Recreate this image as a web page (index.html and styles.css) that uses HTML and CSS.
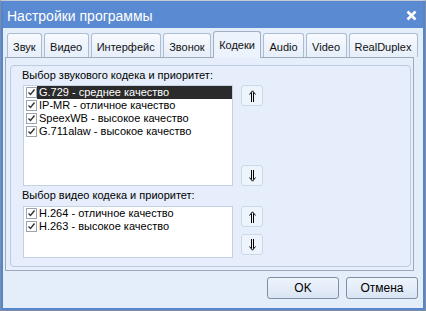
FILE: index.html
```html
<!DOCTYPE html>
<html lang="ru">
<head>
  <meta charset="UTF-8" />
  <title>Настройки программы</title>
  <link rel="stylesheet" href="styles.css">
</head>
<body>
  <div class="frame">
    <div class="window">
      <div class="titlebar">
        <span class="title">Настройки программы</span>
        <svg class="close" width="11" height="11" viewBox="0 0 11 11">
          <path d="M1.5 1.5 L9.5 9.5 M9.5 1.5 L1.5 9.5" stroke="#fff" stroke-width="2.6" />
        </svg>
      </div>

      <div class="tabs">
        <div class="tab">Звук</div>
        <div class="tab">Видео</div>
        <div class="tab">Интерфейс</div>
        <div class="tab">Звонок</div>
        <div class="tab active">Кодеки</div>
        <div class="tab">Audio</div>
        <div class="tab">Video</div>
        <div class="tab">RealDuplex</div>
      </div>

      <div class="panel">
        <div class="group">
          <div class="caption">Выбор звукового кодека и приоритет:</div>
          <div class="codec-row">
            <ul class="listbox audio">
              <li class="item selected">
                <span class="check"><svg width="9" height="9" viewBox="0 0 9 9"><path d="M1.5 4.5 L3.5 6.5 L7.5 1.5" fill="none" stroke="#333" stroke-width="1.4" /></svg></span>
                <span class="name">G.729 - среднее качество</span>
              </li>
              <li class="item">
                <span class="check"><svg width="9" height="9" viewBox="0 0 9 9"><path d="M1.5 4.5 L3.5 6.5 L7.5 1.5" fill="none" stroke="#333" stroke-width="1.4" /></svg></span>
                <span class="name">IP-MR - отличное качество</span>
              </li>
              <li class="item">
                <span class="check"><svg width="9" height="9" viewBox="0 0 9 9"><path d="M1.5 4.5 L3.5 6.5 L7.5 1.5" fill="none" stroke="#333" stroke-width="1.4" /></svg></span>
                <span class="name">SpeexWB - высокое качество</span>
              </li>
              <li class="item">
                <span class="check"><svg width="9" height="9" viewBox="0 0 9 9"><path d="M1.5 4.5 L3.5 6.5 L7.5 1.5" fill="none" stroke="#333" stroke-width="1.4" /></svg></span>
                <span class="name">G.711alaw - высокое качество</span>
              </li>
            </ul>
            <div class="arrows spread">
              <button class="arrow"><svg width="7" height="12" viewBox="0 0 7 12"><path d="M0.5 4.5 L3.5 0.8 L6.5 4.5 M2.5 2.5 V12 M4.5 2.5 V12" fill="none" stroke="#000" stroke-width="1" /></svg></button>
              <button class="arrow"><svg width="7" height="12" viewBox="0 0 7 12"><path d="M0.5 7.5 L3.5 11.2 L6.5 7.5 M2.5 0 V9.5 M4.5 0 V9.5" fill="none" stroke="#000" stroke-width="1" /></svg></button>
            </div>
          </div>

          <div class="caption second">Выбор видео кодека и приоритет:</div>
          <div class="codec-row">
            <ul class="listbox video">
              <li class="item">
                <span class="check"><svg width="9" height="9" viewBox="0 0 9 9"><path d="M1.5 4.5 L3.5 6.5 L7.5 1.5" fill="none" stroke="#333" stroke-width="1.4" /></svg></span>
                <span class="name">H.264 - отличное качество</span>
              </li>
              <li class="item">
                <span class="check"><svg width="9" height="9" viewBox="0 0 9 9"><path d="M1.5 4.5 L3.5 6.5 L7.5 1.5" fill="none" stroke="#333" stroke-width="1.4" /></svg></span>
                <span class="name">H.263 - высокое качество</span>
              </li>
            </ul>
            <div class="arrows">
              <button class="arrow"><svg width="7" height="12" viewBox="0 0 7 12"><path d="M0.5 4.5 L3.5 0.8 L6.5 4.5 M2.5 2.5 V12 M4.5 2.5 V12" fill="none" stroke="#000" stroke-width="1" /></svg></button>
              <button class="arrow"><svg width="7" height="12" viewBox="0 0 7 12"><path d="M0.5 7.5 L3.5 11.2 L6.5 7.5 M2.5 0 V9.5 M4.5 0 V9.5" fill="none" stroke="#000" stroke-width="1" /></svg></button>
            </div>
          </div>
        </div>
      </div>

      <div class="footer">
        <button class="btn">OK</button>
        <button class="btn">Отмена</button>
      </div>
    </div>
  </div>
</body>
</html>
```

FILE: styles.css
```css
body {
  margin: 0;
  font-family: 'Liberation Sans', Arial, sans-serif;
  font-size: 11px;
  color: #000;
  background: #fff;
}
.frame {
  width: 426px;
  height: 311px;
  box-sizing: border-box;
  border: 1px solid #7f8ea4;
  border-top-color: #c3cbd6;
}
.window {
  height: 100%;
  box-sizing: border-box;
  border: 2px solid #5585cd;
  border-top: none;
  background: #e4edfa;
  display: flex;
  flex-direction: column;
}
.titlebar {
  height: 27px;
  flex: none;
  background: #5a8ad1;
  display: flex;
  align-items: center;
  justify-content: space-between;
  padding: 2px 6px 0 4px;
  box-sizing: border-box;
}
.title {
  color: #fff;
  font-size: 14px;
}
.close {
  display: block;
}
.tabs {
  height: 29px;
  flex: none;
  display: flex;
  align-items: flex-end;
  gap: 2px;
  padding-left: 4px;
}
.tab {
  height: 24px;
  box-sizing: border-box;
  padding: 7px 5.5px 0 5px;
  border: 1px solid #aebcd0;
  border-bottom: none;
  border-radius: 3px 3px 0 0;
  background: linear-gradient(#f7fafe, #e6eefa);
  font-size: 11px;
  color: #111;
  position: relative;
  white-space: nowrap;
}
.tab.active {
  padding-top: 7px;
  background: #edf3fc;
  margin-bottom: -1px;
  height: 27px;
  z-index: 1;
  border-color: #a0afc4;
}
.panel {
  flex: 1;
  margin: 0 9px 0 2px;
  border: 1px solid #9eaabb;
  background: #e6eefb;
  padding: 7px 2px 3px 4px;
  display: flex;
}
.group {
  flex: 1;
  border: 1px solid #bccbe0;
  border-radius: 4px;
  padding: 2px 0 0 11px;
}
.caption {
  line-height: 14px;
  margin-bottom: 3px;
}
.caption.second {
  margin-top: 2px;
  margin-bottom: 4px;
}
.codec-row {
  display: flex;
  padding-left: 1px;
}
.listbox {
  list-style: none;
  margin: 0;
  padding: 0 0 0 2px;
  width: 210px;
  box-sizing: border-box;
  background: #fff;
  border: 1px solid #c3d1e3;
}
.listbox.audio {
  height: 101px;
}
.listbox.video {
  height: 52px;
}
.item {
  display: flex;
  height: 13px;
  line-height: 13px;
}
.check {
  width: 11px;
  height: 11px;
  box-sizing: border-box;
  border: 1px solid #9ba5b1;
  background: #fff;
  margin-top: 1px;
  flex: none;
  display: flex;
  align-items: center;
  justify-content: center;
}
.check svg {
  display: block;
}
.name {
  flex: 1;
  padding-left: 2px;
  white-space: nowrap;
}
.item.selected .name {
  background: #2b2b2b;
  color: #fff;
}
.arrows {
  display: flex;
  flex-direction: column;
  gap: 7px;
  margin-left: 8px;
}
.arrows.spread {
  justify-content: space-between;
}
.arrow {
  width: 22px;
  height: 21px;
  padding: 0;
  border: 1px solid #cbd8e8;
  border-radius: 3px;
  background: #eef4fc;
  display: flex;
  align-items: center;
  justify-content: center;
}
.arrow svg {
  display: block;
}
.footer {
  height: 37px;
  flex: none;
  display: flex;
  justify-content: flex-end;
  align-items: flex-start;
  gap: 7px;
  padding: 6px 5px 0 0;
  box-sizing: border-box;
}
.btn {
  width: 72px;
  height: 22px;
  border: 1px solid #838fa0;
  border-radius: 3px;
  background: linear-gradient(#eef4fc, #d9e5f4);
  font-family: 'Liberation Sans', Arial, sans-serif;
  font-size: 12px;
  color: #000;
  padding: 0;
}
```
